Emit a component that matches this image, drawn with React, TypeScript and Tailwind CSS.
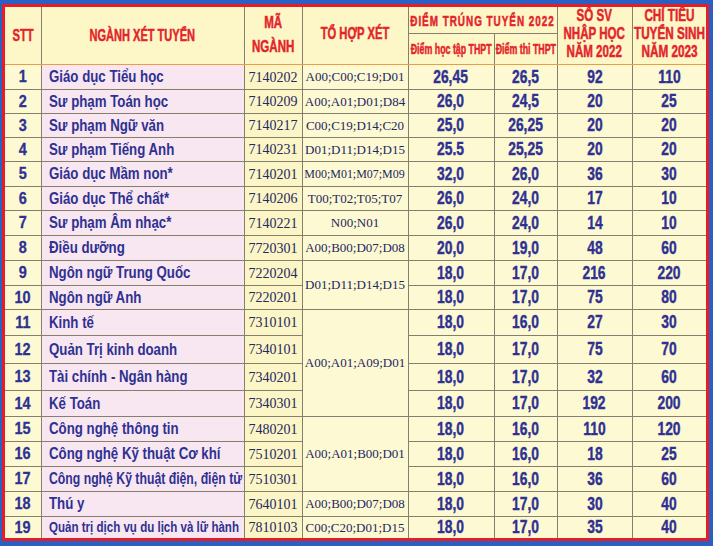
import React from "react";

type Row = {
  n: number;
  name: string;
  nameCls: string;
  code: string;
  th: string | null;
  thCls?: string;
  span: number;
  a: string;
  b: string;
  c: string;
  d: string;
  h: string;
};

const NAME_STD = "text-[17px] scale-x-[0.78]";

const rows: Row[] = [
  { n: 1, name: "Giáo dục Tiểu học", nameCls: NAME_STD, code: "7140202", th: "A00;C00;C19;D01", span: 1, a: "26,45", b: "26,5", c: "92", d: "110", h: "h-[25px]" },
  { n: 2, name: "Sư phạm Toán học", nameCls: NAME_STD, code: "7140209", th: "A00;A01;D01;D84", span: 1, a: "26,0", b: "24,5", c: "20", d: "25", h: "h-[24px]" },
  { n: 3, name: "Sư phạm Ngữ văn", nameCls: NAME_STD, code: "7140217", th: "C00;C19;D14;C20", span: 1, a: "25,0", b: "26,25", c: "20", d: "20", h: "h-[24px]" },
  { n: 4, name: "Sư phạm Tiếng Anh", nameCls: NAME_STD, code: "7140231", th: "D01;D11;D14;D15", span: 1, a: "25.5", b: "25,25", c: "20", d: "20", h: "h-[24px]" },
  { n: 5, name: "Giáo dục Mầm non*", nameCls: NAME_STD, code: "7140201", th: "M00;M01;M07;M09", thCls: "scale-x-[0.92]", span: 1, a: "32,0", b: "26,0", c: "36", d: "30", h: "h-[25px]" },
  { n: 6, name: "Giáo dục Thể chất*", nameCls: NAME_STD, code: "7140206", th: "T00;T02;T05;T07", span: 1, a: "26,0", b: "24,0", c: "17", d: "10", h: "h-[24px]" },
  { n: 7, name: "Sư phạm Âm nhạc*", nameCls: NAME_STD, code: "7140221", th: "N00;N01", span: 1, a: "26,0", b: "24,0", c: "14", d: "10", h: "h-[25px]" },
  { n: 8, name: "Điều dưỡng", nameCls: NAME_STD, code: "7720301", th: "A00;B00;D07;D08", span: 1, a: "20,0", b: "19,0", c: "48", d: "60", h: "h-[25px]" },
  { n: 9, name: "Ngôn ngữ Trung Quốc", nameCls: NAME_STD, code: "7220204", th: "D01;D11;D14;D15", span: 2, a: "18,0", b: "17,0", c: "216", d: "220", h: "h-[25px]" },
  { n: 10, name: "Ngôn ngữ Anh", nameCls: NAME_STD, code: "7220201", th: null, span: 1, a: "18,0", b: "17,0", c: "75", d: "80", h: "h-[24px]" },
  { n: 11, name: "Kinh tế", nameCls: NAME_STD, code: "7310101", th: "A00;A01;A09;D01", span: 4, a: "18,0", b: "16,0", c: "27", d: "30", h: "h-[26px]" },
  { n: 12, name: "Quản Trị kinh doanh", nameCls: NAME_STD, code: "7340101", th: null, span: 1, a: "18,0", b: "17,0", c: "75", d: "70", h: "h-[28px]" },
  { n: 13, name: "Tài chính - Ngân hàng", nameCls: NAME_STD, code: "7340201", th: null, span: 1, a: "18,0", b: "17,0", c: "32", d: "60", h: "h-[27px]" },
  { n: 14, name: "Kế Toán", nameCls: NAME_STD, code: "7340301", th: null, span: 1, a: "18,0", b: "17,0", c: "192", d: "200", h: "h-[26px]" },
  { n: 15, name: "Công nghệ thông tin", nameCls: NAME_STD, code: "7480201", th: "A00;A01;B00;D01", span: 3, a: "18,0", b: "16,0", c: "110", d: "120", h: "h-[25px]" },
  { n: 16, name: "Công nghệ Kỹ thuật Cơ khí", nameCls: NAME_STD, code: "7510201", th: null, span: 1, a: "18,0", b: "16,0", c: "18", d: "25", h: "h-[25px]" },
  { n: 17, name: "Công nghệ Kỹ thuật điện, điện tử", nameCls: "text-[16px] scale-x-[0.765]", code: "7510301", th: null, span: 1, a: "18,0", b: "16,0", c: "36", d: "60", h: "h-[25px]" },
  { n: 18, name: "Thú y", nameCls: NAME_STD, code: "7640101", th: "A00;B00;D07;D08", span: 1, a: "18,0", b: "17,0", c: "30", d: "40", h: "h-[25px]" },
  { n: 19, name: "Quản trị dịch vụ du lịch và lữ hành", nameCls: "text-[15px] scale-x-[0.77]", code: "7810103", th: "C00;C20;D01;D15", span: 1, a: "18,0", b: "17,0", c: "35", d: "40", h: "h-[22px]" },
];

const line = "border border-[#857f6e]";
const hdrBottom = "border-b-[#ee9b45]";

function Hdr({ children, cls }: { children: React.ReactNode; cls: string }) {
  return (
    <div className="flex justify-center">
      <span
        className={`inline-block whitespace-nowrap text-center font-bold text-[#e3242b] [-webkit-text-stroke:0.5px_#e3242b] ${cls}`}
      >
        {children}
      </span>
    </div>
  );
}

function Num({ v }: { v: string }) {
  return (
    <div className="flex justify-center">
      <span className="inline-block whitespace-nowrap text-[18px] leading-none font-bold text-[#2e3192] scale-x-[0.77] [-webkit-text-stroke:0.4px_#2e3192]">
        {v}
      </span>
    </div>
  );
}

export default function App() {
  return (
    <div className="w-[713px] h-[546px] bg-[#2c5fc3] pt-[4px] pl-[2px] font-['Liberation_Sans',Arial,sans-serif]">
      <div className="w-[707px] h-[537px] border-[3px] border-[#e31e26] bg-[#fdf9d3] overflow-hidden">
        <table className="table-fixed border-collapse border-hidden w-[701px] leading-none">
          <colgroup>
            <col className="w-[36px]" />
            <col className="w-[203px]" />
            <col className="w-[58px]" />
            <col className="w-[106px]" />
            <col className="w-[86px]" />
            <col className="w-[63px]" />
            <col className="w-[75px]" />
            <col className="w-[74px]" />
          </colgroup>
          <thead className="bg-[#fdf7c8]">
            <tr className="h-[26px]">
              <th rowSpan={2} className={`${line} ${hdrBottom} p-0 align-middle`}>
                <Hdr cls="text-[17px] leading-none scale-x-[0.66]">STT</Hdr>
              </th>
              <th rowSpan={2} className={`${line} ${hdrBottom} p-0 align-middle`}>
                <Hdr cls="text-[17px] leading-none scale-x-[0.65]">NGÀNH XÉT TUYỂN</Hdr>
              </th>
              <th rowSpan={2} className={`${line} ${hdrBottom} p-0 align-middle`}>
                <Hdr cls="text-[17px] leading-[24px] scale-x-[0.68]">
                  MÃ
                  <br />
                  NGÀNH
                </Hdr>
              </th>
              <th rowSpan={2} className={`${line} ${hdrBottom} p-0 align-middle`}>
                <Hdr cls="text-[17px] leading-none scale-x-[0.66] pb-[3px]">TỔ HỢP XÉT</Hdr>
              </th>
              <th colSpan={2} className={`${line} p-0 align-middle`}>
                <Hdr cls="text-[15px] leading-none tracking-[1.5px] scale-x-[0.66] pt-[2px]">ĐIỂM TRÚNG TUYỂN 2022</Hdr>
              </th>
              <th rowSpan={2} className={`${line} ${hdrBottom} p-0 align-middle`}>
                <Hdr cls="text-[17px] leading-[18px] scale-x-[0.68] pb-[2px]">
                  SỐ SV
                  <br />
                  NHẬP HỌC
                  <br />
                  NĂM 2022
                </Hdr>
              </th>
              <th rowSpan={2} className={`${line} ${hdrBottom} p-0 align-middle`}>
                <Hdr cls="text-[17px] leading-[18px] scale-x-[0.69] pb-[2px]">
                  CHỈ TIÊU
                  <br />
                  TUYỂN SINH
                  <br />
                  NĂM 2023
                </Hdr>
              </th>
            </tr>
            <tr className="h-[31px]">
              <th className={`${line} ${hdrBottom} p-0 align-middle`}>
                <Hdr cls="text-[14px] leading-none scale-x-[0.63]">Điểm học tập THPT</Hdr>
              </th>
              <th className={`${line} ${hdrBottom} p-0 align-middle`}>
                <Hdr cls="text-[14px] leading-none scale-x-[0.63]">Điểm thi THPT</Hdr>
              </th>
            </tr>
          </thead>
          <tbody>
            {rows.map((r) => (
              <tr key={r.n} className={r.h}>
                <td className={`${line} p-0 align-middle bg-[#fdf9d3]`}>
                  <div className="flex justify-center">
                    <span className="inline-block text-[17px] leading-none font-bold text-[#2e3192] scale-x-[0.85] [-webkit-text-stroke:0.3px_#2e3192]">
                      {r.n}
                    </span>
                  </div>
                </td>
                <td className={`${line} p-0 pl-[7px] align-middle bg-[#f8e6f0]`}>
                  <span className={`inline-block whitespace-nowrap leading-none font-bold text-[#2e3192] origin-left ${r.nameCls}`}>
                    {r.name}
                  </span>
                </td>
                <td className={`${line} p-0 align-middle bg-[#fcf5c6] text-center`}>
                  <span className="whitespace-nowrap font-['Liberation_Serif',serif] text-[14px] leading-none text-[#232860]">{r.code}</span>
                </td>
                {r.th !== null && (
                  <td rowSpan={r.span} className={`${line} p-0 align-middle bg-[#fdf9d3]`}>
                    <div className="flex justify-center">
                      <span
                        className={`inline-block whitespace-nowrap font-['Liberation_Serif',serif] text-[13px] leading-none text-[#232860] ${r.thCls ?? ""}`}
                      >
                        {r.th}
                      </span>
                    </div>
                  </td>
                )}
                <td className={`${line} p-0 align-middle`}>
                  <Num v={r.a} />
                </td>
                <td className={`${line} p-0 align-middle`}>
                  <Num v={r.b} />
                </td>
                <td className={`${line} p-0 align-middle`}>
                  <Num v={r.c} />
                </td>
                <td className={`${line} p-0 align-middle`}>
                  <Num v={r.d} />
                </td>
              </tr>
            ))}
          </tbody>
        </table>
      </div>
    </div>
  );
}
